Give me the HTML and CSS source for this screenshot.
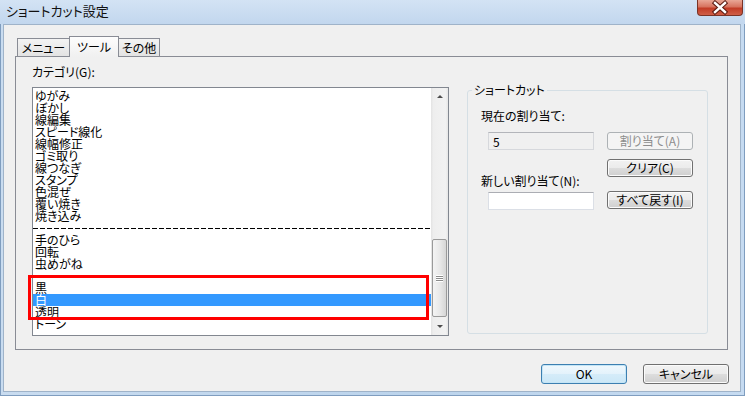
FILE: index.html
```html
<!DOCTYPE html>
<html lang="ja">
<head>
  <meta charset="UTF-8">
  <title>ショートカット設定</title>
  <link rel="stylesheet" href="styles.css">
</head>
<body>

  <div class="window">
    <div class="titlebar">
      <span class="title">ショートカット設定</span>
      <div class="close">
        <svg width="44" height="15" viewBox="0 0 44 15">
          <path d="M17 3 L27 12 M27 3 L17 12" stroke="#5a1a10" stroke-width="4.4" stroke-linecap="square"/>
          <path d="M17 3 L27 12 M27 3 L17 12" stroke="#ffffff" stroke-width="2.4" stroke-linecap="square"/>
        </svg>
      </div>
    </div>

    <div class="client">
      <div class="tabs">
        <div class="tab first">メニュー</div>
        <div class="tab active">ツール</div>
        <div class="tab">その他</div>
      </div>

      <div class="panel">
        <div class="left">
          <div class="label">カテゴリ(G):</div>
          <div class="listbox">
            <div class="items">
              <div class="item">ゆがみ</div>
              <div class="item">ぼかし</div>
              <div class="item">線編集</div>
              <div class="item">スピード線化</div>
              <div class="item">線幅修正</div>
              <div class="item">ゴミ取り</div>
              <div class="item">線つなぎ</div>
              <div class="item">スタンプ</div>
              <div class="item">色混ぜ</div>
              <div class="item">覆い焼き</div>
              <div class="item">焼き込み</div>
              <div class="item sep"><span></span></div>
              <div class="item">手のひら</div>
              <div class="item">回転</div>
              <div class="item">虫めがね</div>
              <div class="item"></div>
              <div class="item">黒</div>
              <div class="item selected">白</div>
              <div class="item">透明</div>
              <div class="item">トーン</div>
            </div>
            <div class="scrollbar">
              <div class="arrow"><span class="up"></span></div>
              <div class="track">
                <div class="thumb" style="margin-top: 134px; height: 78px;">
                  <span class="grip"></span>
                </div>
              </div>
              <div class="arrow"><span class="down"></span></div>
            </div>
            <div class="mark"></div>
          </div>
        </div>

        <fieldset class="group">
          <legend>ショートカット</legend>
          <div class="group-body">
            <div class="fields">
              <div class="label">現在の割り当て:</div>
              <div class="textbox readonly">5</div>
              <div class="label second">新しい割り当て(N):</div>
              <div class="textbox"></div>
            </div>
            <div class="buttons">
              <button class="btn disabled">割り当て(A)</button>
              <button class="btn">クリア(C)</button>
              <button class="btn">すべて戻す(I)</button>
            </div>
          </div>
        </fieldset>
      </div>

      <div class="footer">
        <button class="btn wide default">OK</button>
        <button class="btn wide">キャンセル</button>
      </div>
    </div>
  </div>

</body>
</html>
```

FILE: styles.css
```css
* {
  box-sizing: border-box;
}
body {
  margin: 0;
  font-family: "Noto Sans CJK JP", "Noto Sans", sans-serif;
  font-size: 12px;
  line-height: 12px;
  font-feature-settings: "palt";
  color: #000;
}
.window {
  width: 745px;
  height: 396px;
  display: flex;
  flex-direction: column;
  background: linear-gradient(to right, #c9dcf0, #bcd4ec 55%, #c6dbf1);
  border: 1px solid #7f9dbf;
  border-top: none;
}
.titlebar {
  height: 24px;
  display: flex;
  justify-content: space-between;
  align-items: flex-start;
  padding-left: 6px;
  background: linear-gradient(#d3e3f4, #c2d7ee);
  margin: 0 -1px;
}
.title {
  margin-top: 4px;
  font-size: 13px;
  line-height: 14px;
  color: #111;
}
.close {
  width: 46px;
  height: 16px;
  margin-right: 2px;
  border: 1px solid #7b3326;
  border-top: none;
  border-radius: 0 0 4px 4px;
  background: linear-gradient(#e9a796, #d7735f 45%, #c23c26 55%, #cf5f48);
  display: flex;
  justify-content: center;
}
.client {
  flex: 1;
  margin: 0 3px 3px 2px;
  background: #f0f0f0;
  border: 1px solid #9fb3c9;
  padding: 11px 11px 0 11px;
}

/* tabs */
.tabs {
  display: flex;
  align-items: flex-end;
  height: 20px;
  margin-left: 2px;
}
.tab {
  height: 18px;
  padding-top: 3px;
  text-align: center;
  border: 1px solid #898c95;
  border-bottom: none;
  background: linear-gradient(#f3f3f3, #e3e3e3);
}
.tab.first {
  width: 53px;
}
.tab.active {
  width: 50px;
  height: 21px;
  margin: 0 -1px -1px -1px;
  padding-top: 4px;
  position: relative;
  z-index: 1;
  background: linear-gradient(#fdfdfd, #f0f0f0);
}
.tab:last-child {
  width: 42px;
}
.panel {
  width: 713px;
  height: 294px;
  border: 1px solid #898c95;
  background: #f0f0f0;
  padding: 9px 0 0 16px;
  display: flex;
  gap: 18px;
}

/* category list */
.left {
  width: 417px;
}
.label {
  height: 12px;
}
.listbox {
  position: relative;
  margin-top: 9px;
  height: 249px;
  border: 1px solid #828790;
  background: #fff;
  display: flex;
}
.items {
  flex: 1;
  overflow: hidden;
  padding-top: 2px;
}
.item {
  height: 12px;
  padding-left: 2px;
  white-space: nowrap;
}
.item.selected {
  background: #3399ff;
  color: #fff;
}
.item.sep {
  padding: 6px 0 0 0;
}
.item.sep span {
  display: block;
  height: 1px;
  background: repeating-linear-gradient(to right, #000 0 5px, transparent 5px 7px);
}
.scrollbar {
  width: 17px;
  display: flex;
  flex-direction: column;
  background: linear-gradient(to right, #e3e3e3, #eeeeee 15%, #f2f2f2 85%, #e6e6e6);
}
.arrow {
  height: 17px;
  display: flex;
  justify-content: center;
  align-items: center;
}
.up, .down {
  width: 0;
  height: 0;
  border-left: 3px solid transparent;
  border-right: 3px solid transparent;
}
.up {
  border-bottom: 3px solid #4d4d4d;
}
.down {
  border-top: 3px solid #4d4d4d;
}
.track {
  flex: 1;
}
.thumb {
  margin: 0 1px;
  border: 1px solid #9a9a9a;
  border-radius: 2px;
  background: linear-gradient(to right, #f4f4f4, #e9e9e9 50%, #d6d6d6);
  display: flex;
  justify-content: center;
  align-items: center;
}
.grip {
  width: 7px;
  height: 7px;
  background: repeating-linear-gradient(#ffffff 0 1px, #8b8b8b 1px 2px);
}
.mark {
  position: absolute;
  left: -5px;
  top: 187px;
  width: 401px;
  height: 45px;
  border: 3px solid #ff0000;
}

/* shortcut group */
.group {
  width: 241px;
  height: 250px;
  margin: 18px 0 0 0;
  padding: 0;
  border: 1px solid #d5dfe5;
  border-radius: 3px;
}
.group legend {
  margin-left: 4px;
  padding: 0 2px;
  line-height: 12px;
}
.group-body {
  display: flex;
  gap: 13px;
  padding: 14px 0 0 13px;
}
.fields {
  width: 113px;
}
.label.second {
  margin-top: 25px;
}
.textbox {
  margin: 10px 0 0 7px;
  width: 106px;
  height: 18px;
  padding: 3px 0 0 4px;
  background: #fff;
  border: 1px solid #dbdfe6;
  border-top-color: #abadb3;
}
.label + .textbox {
  margin-top: 10px;
}
.label.second + .textbox {
  margin-top: 5px;
}
.textbox.readonly {
  background: #f0f0f0;
  border-color: #d6d8dc;
  border-top-color: #b3b5ba;
}
.buttons {
  display: flex;
  flex-direction: column;
  padding-top: 22px;
}
.btn {
  font: inherit;
  font-feature-settings: "palt";
  line-height: 12px;
  color: #000;
  width: 86px;
  height: 18px;
  padding: 0;
  border: 1px solid #707070;
  border-radius: 3px;
  background: linear-gradient(#f2f2f2, #ebebeb 50%, #dddddd 50%, #cfcfcf);
  box-shadow: inset 0 0 0 1px #fbfbfb;
}
.buttons .btn + .btn {
  margin-top: 9px;
}
.buttons .btn:last-child {
  margin-top: 14px;
}
.btn.disabled {
  color: #8d8d8d;
  border-color: #adb2b5;
  background: #f4f4f4;
  box-shadow: none;
}

/* dialog buttons */
.footer {
  display: flex;
  justify-content: flex-end;
  gap: 16px;
  margin-top: 14px;
}
.btn.wide {
  height: 20px;
}
.btn.default {
  border-color: #3c7fb1;
  box-shadow: inset 0 0 0 1px #c4e5f6;
  background: linear-gradient(#f0f8fd, #e3f2fb 50%, #d5ecf9 50%, #cbe7f7);
}
```
